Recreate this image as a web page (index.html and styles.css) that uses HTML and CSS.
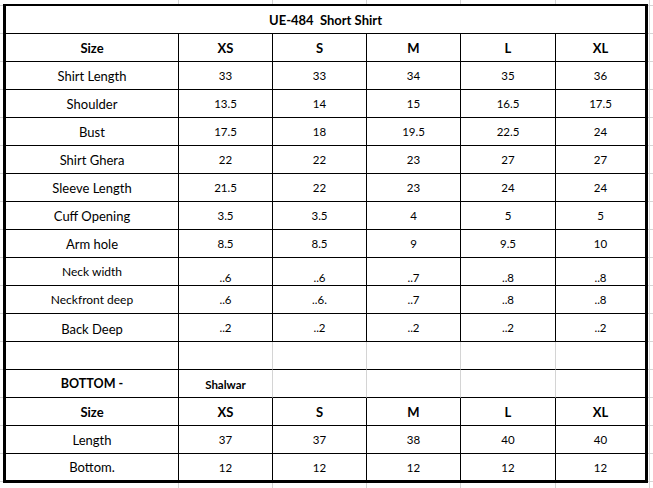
FILE: index.html
```html
<!DOCTYPE html>
<html>
<head>
<meta charset="utf-8">
<link rel="stylesheet" href="styles.css">
</head>
<body>
<div class="sheet">
  <div class="c title span">UE-484&nbsp;&nbsp;Short Shirt</div>

  <div class="c hd">Size</div>
  <div class="c hd">XS</div>
  <div class="c hd">S</div>
  <div class="c hd">M</div>
  <div class="c hd">L</div>
  <div class="c hd nr">XL</div>

  <div class="c lbl">Shirt Length</div>
  <div class="c v">33</div>
  <div class="c v">33</div>
  <div class="c v">34</div>
  <div class="c v">35</div>
  <div class="c v nr">36</div>

  <div class="c lbl">Shoulder</div>
  <div class="c v">13.5</div>
  <div class="c v">14</div>
  <div class="c v">15</div>
  <div class="c v">16.5</div>
  <div class="c v nr">17.5</div>

  <div class="c lbl">Bust</div>
  <div class="c v">17.5</div>
  <div class="c v">18</div>
  <div class="c v">19.5</div>
  <div class="c v">22.5</div>
  <div class="c v nr">24</div>

  <div class="c lbl">Shirt Ghera</div>
  <div class="c v">22</div>
  <div class="c v">22</div>
  <div class="c v">23</div>
  <div class="c v">27</div>
  <div class="c v nr">27</div>

  <div class="c lbl">Sleeve Length</div>
  <div class="c v">21.5</div>
  <div class="c v">22</div>
  <div class="c v">23</div>
  <div class="c v">24</div>
  <div class="c v nr">24</div>

  <div class="c lbl">Cuff Opening</div>
  <div class="c v">3.5</div>
  <div class="c v">3.5</div>
  <div class="c v">4</div>
  <div class="c v">5</div>
  <div class="c v nr">5</div>

  <div class="c lbl">Arm hole</div>
  <div class="c v">8.5</div>
  <div class="c v">8.5</div>
  <div class="c v">9</div>
  <div class="c v">9.5</div>
  <div class="c v nr">10</div>

  <div class="c lbl small">Neck width</div>
  <div class="c v bot">..6</div>
  <div class="c v bot">..6</div>
  <div class="c v bot">..7</div>
  <div class="c v bot">..8</div>
  <div class="c v bot nr">..8</div>

  <div class="c lbl small">Neckfront deep</div>
  <div class="c v">..6</div>
  <div class="c v">..6.</div>
  <div class="c v">..7</div>
  <div class="c v">..8</div>
  <div class="c v nr">..8</div>

  <div class="c lbl low">Back Deep</div>
  <div class="c v">..2</div>
  <div class="c v">..2</div>
  <div class="c v">..2</div>
  <div class="c v">..2</div>
  <div class="c v nr">..2</div>

  <div class="c"></div>
  <div class="c gr"></div>
  <div class="c gr"></div>
  <div class="c gr"></div>
  <div class="c gr"></div>
  <div class="c nr"></div>

  <div class="c hd bottom-lbl">BOTTOM -</div>
  <div class="c gr shalwar">Shalwar</div>
  <div class="c gr"></div>
  <div class="c gr"></div>
  <div class="c gr"></div>
  <div class="c nr"></div>

  <div class="c hd">Size</div>
  <div class="c hd">XS</div>
  <div class="c hd">S</div>
  <div class="c hd">M</div>
  <div class="c hd">L</div>
  <div class="c hd nr">XL</div>

  <div class="c lbl">Length</div>
  <div class="c v">37</div>
  <div class="c v">37</div>
  <div class="c v">38</div>
  <div class="c v">40</div>
  <div class="c v nr">40</div>

  <div class="c lbl nb">Bottom.</div>
  <div class="c v nb">12</div>
  <div class="c v nb">12</div>
  <div class="c v nb">12</div>
  <div class="c v nb">12</div>
  <div class="c v nb nr">12</div>
</div>
</body>
</html>
```

FILE: styles.css
```css
html, body {
  margin: 0;
  padding: 0;
}

body {
  width: 653px;
  height: 488px;
  overflow: hidden;
  background-color: #fff;
  background-image:
    linear-gradient(#d4d4d4, #d4d4d4),
    linear-gradient(#d4d4d4, #d4d4d4),
    linear-gradient(#d4d4d4, #d4d4d4),
    linear-gradient(#d4d4d4, #d4d4d4),
    linear-gradient(#d4d4d4, #d4d4d4),
    linear-gradient(#d4d4d4, #d4d4d4),
    repeating-linear-gradient(180deg, transparent 0 5px, #d4d4d4 5px 6px, transparent 6px 28px);
  background-size: 1px 100%, 1px 100%, 1px 100%, 1px 100%, 1px 100%, 1px 100%, 100% 100%;
  background-position: 178px 0, 272px 0, 366px 0, 460px 0, 555px 0, 649px 0, 0 0;
  background-repeat: no-repeat;
  font-family: Lato, "Open Sans", sans-serif;
  color: #000;
}

.sheet {
  margin: 4px 0 0 3px;
  width: 639px;
  display: grid;
  grid-template-columns: 173px 94px 94px 94px 95px 89px;
  grid-template-rows: repeat(16, 28px) 26px;
  border-top: 2px solid #000;
  border-left: 3px solid #000;
  border-right: 3px solid #000;
  border-bottom: 3px solid #000;
}

.c {
  box-sizing: border-box;
  border-right: 1px solid #000;
  border-bottom: 1px solid #000;
  display: flex;
  align-items: center;
  justify-content: center;
  white-space: nowrap;
  line-height: 1;
  padding-top: 1px;
}

.span {
  grid-column: 1 / -1;
  border-right: none;
}

.nr { border-right: none; }
.nb { border-bottom: none; }
.gr { border-right-color: transparent; }

.title {
  background: #fff;
  font-weight: 700;
  font-size: 13px;
}

.hd {
  font-weight: 700;
  font-size: 13px;
}

.bottom-lbl {
  font-size: 12.5px;
}

.lbl {
  font-size: 13px;
}

.lbl.small {
  font-size: 12px;
}

.lbl.low {
  padding-top: 4px;
}

.v {
  font-size: 11.5px;
}

.v.bot {
  align-items: flex-end;
  padding-bottom: 2px;
}

.shalwar {
  font-size: 11.5px;
  font-weight: 700;
  padding-top: 3px;
}
```
